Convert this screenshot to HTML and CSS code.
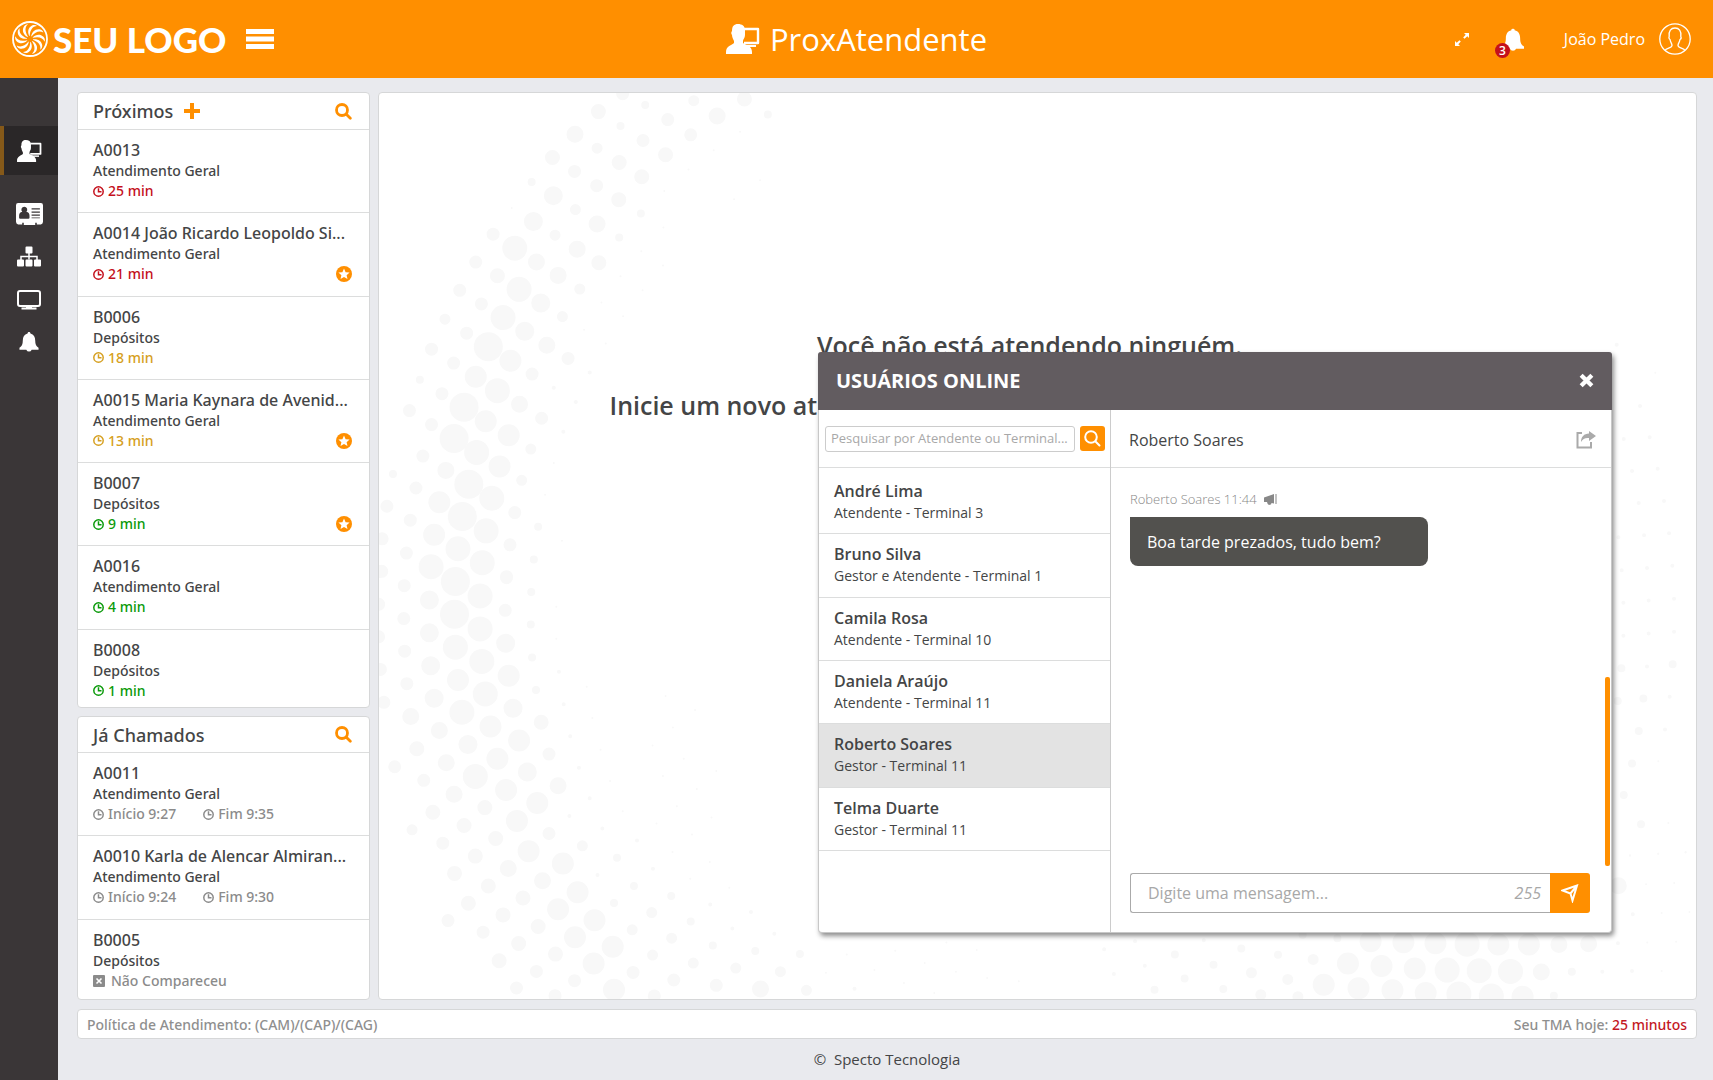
FILE: index.html
```html
<!DOCTYPE html>
<html lang="pt-BR">
<head>
<meta charset="utf-8">
<title>ProxAtendente</title>
<link rel="stylesheet" href="styles.css">
</head>
<body>
<svg class="sprite" aria-hidden="true">
  <symbol id="i-agent" viewBox="0 0 34 30">
    <path d="M12 0c4 0 7 2 7 6v5c0 3-2 4-2 6v2c3 2 9 3 9 9v2H0v-2c0-6 6-7 8-9v-2C7 15 6 13 6 11c-1-1-1-3 0-4 0-5 2-7 6-7z" fill="currentColor"/>
    <path d="M18 5h14v14H18" fill="none" stroke="currentColor" stroke-width="2.400" stroke-linejoin="round"/>
    <path d="M20 21h10v2H20z" fill="currentColor"/>
  </symbol>
  <symbol id="i-card" viewBox="0 0 26 21">
    <path fill="currentColor" fill-rule="evenodd" d="M2 0h22q2 0 2 2v16q0 2-2 2.500h-4v-1.500h-1.500v2h-11v-2H6v1.500H2q-2-.5-2-2.500V2q0-2 2-2zM8 3.500a2.800 2.800 0 0 0-2 4.800c-2 .4-3 1.700-3 4v1.700q0 1 1 1h8q1 0 1-1v-1.700c0-2.300-1-3.600-3-4a2.800 2.800 0 0 0-2-4.800zM15 5h8v1.200h-8zM15 8h8v1.200h-8zM15 11h8v1.200h-8zM15 13.800h8v.8h-8z"/>
  </symbol>
  <symbol id="i-tree" viewBox="0 0 24 20">
    <path fill="none" stroke="currentColor" stroke-width="1.500" d="M12 5v8M4 14v-4h16v4"/>
    <path fill="currentColor" d="M9.500 0h5q1 0 1 1v5q0 1-1 1h-5q-1 0-1-1V1q0-1 1-1zM1 13h5q1 0 1 1v5q0 1-1 1H1q-1 0-1-1v-5q0-1 1-1zM9.500 13h5q1 0 1 1v5q0 1-1 1h-5q-1 0-1-1v-5q0-1 1-1zM18 13h5q1 0 1 1v5q0 1-1 1h-5q-1 0-1-1v-5q0-1 1-1z"/>
  </symbol>
  <symbol id="i-screen" viewBox="0 0 24 20">
    <rect x="1" y="1" width="22" height="15" rx="2" fill="none" stroke="currentColor" stroke-width="2"/>
    <path fill="currentColor" d="M9 16h6v1.500h4.500V19.500h-15V17.500H9z"/>
  </symbol>
  <symbol id="i-bell" viewBox="0 0 20 22">
    <path fill="currentColor" d="M10 0c1 0 1.500.7 1.500 1.600C15 2.500 16.500 5 16.500 9c0 4 1 6 3.500 7.500v2h-7.200a3 3 0 0 1-5.600 0H0v-2C2.500 15 3.500 13 3.500 9c0-4 1.500-6.500 5-7.400C8.500.7 9 0 10 0z"/>
  </symbol>
  <symbol id="i-search" viewBox="0 0 17 17">
    <path fill="none" stroke="currentColor" stroke-width="2.800" stroke-linecap="round" d="M7 1.500a5.500 5.500 0 1 0 0 11 5.500 5.500 0 1 0 0-11M11.300 11.300l4 4"/>
  </symbol>
  <symbol id="i-clock" viewBox="0 0 11 11">
    <path fill="none" stroke="currentColor" stroke-width="1.500" d="M5.500.8a4.700 4.700 0 1 0 0 9.400 4.700 4.700 0 1 0 0-9.400M5.500 2.300v3.400h3"/>
  </symbol>
  <symbol id="i-star" viewBox="0 0 16 16">
    <circle cx="8" cy="8" r="8" fill="#ff8f00"/>
    <path fill="#fff" d="M8 2.500l1.600 3.700 4 .3-3 2.700.9 3.900L8 11l-3.500 2.100.9-3.900-3-2.700 4-.3z"/>
  </symbol>
</svg>

<header class="topbar">
  <div class="brand">
    <svg class="brand-mark" viewBox="0 0 36 36" aria-hidden="true">
      <circle cx="18" cy="18" r="17" fill="none" stroke="currentColor" stroke-width="1.800"/>
      <g fill="currentColor">
        <path id="blade" d="M17.300 15c-2-4-1.300-8.300 2.700-10.500 2-.9 4-.5 5 .5-4.200.2-7 3.800-7.300 10z"/>
        <use href="#blade" transform="rotate(36 18 18)"/><use href="#blade" transform="rotate(72 18 18)"/><use href="#blade" transform="rotate(108 18 18)"/><use href="#blade" transform="rotate(144 18 18)"/><use href="#blade" transform="rotate(180 18 18)"/><use href="#blade" transform="rotate(216 18 18)"/><use href="#blade" transform="rotate(252 18 18)"/><use href="#blade" transform="rotate(288 18 18)"/><use href="#blade" transform="rotate(324 18 18)"/>
      </g>
    </svg>
    <span class="brand-name">SEU LOGO</span>
    <button class="plain menu-toggle" aria-label="Menu"><svg viewBox="0 0 28 20" width="28" height="20"><path fill="currentColor" d="M0 0h28v5H0zM0 7.500h28v5H0zM0 15h28v5H0z"/></svg></button>
  </div>
  <h1 class="app-title"><svg width="34" height="30" aria-hidden="true"><use href="#i-agent"/></svg>ProxAtendente</h1>
  <div class="tools">
    <button class="plain" aria-label="Tela cheia"><svg class="expand" viewBox="0 0 14 13" width="14" height="13"><path fill="currentColor" d="M9 0h5v5l-1.700-1.700-2.800 2.500-1.300-1.300 2.500-2.800zM0 8l1.700 1.700 2.800-2.500 1.300 1.300-2.500 2.800L5 13H0z"/></svg></button>
    <button class="plain alerts" aria-label="Notificações"><svg viewBox="0 0 20 22" width="22" height="25"><use href="#i-bell"/></svg><span class="badge">3</span></button>
    <a class="account" href="#conta">João Pedro
      <svg viewBox="0 0 32 32" width="32" height="32" fill="none" stroke="currentColor" stroke-width="1.300" aria-hidden="true"><circle cx="16" cy="16" r="15.200"/><path d="M6 27.500c1-2.500 7-2.500 7-5 0-2-1.500-3-2-6-1-.5-1.300-2-.8-3C9.500 8 12 5 16 5s6.500 3 5.800 8.500c.5 1 .2 2.500-.8 3-.5 3-2 4-2 6 0 2.500 6 2.500 7 5"/></svg>
    </a>
  </div>
</header>

<div class="shell">
  <nav class="rail" aria-label="Principal">
    <a class="rail-link active" href="#atendimento" aria-label="Atendimento"><svg width="25" height="22"><use href="#i-agent"/></svg></a>
    <a class="rail-link" href="#cadastros" aria-label="Cadastros"><svg width="27" height="22"><use href="#i-card"/></svg></a>
    <a class="rail-link" href="#setores" aria-label="Setores"><svg width="24" height="21"><use href="#i-tree"/></svg></a>
    <a class="rail-link" href="#monitor" aria-label="Monitor"><svg width="24" height="20"><use href="#i-screen"/></svg></a>
    <a class="rail-link" href="#avisos" aria-label="Avisos"><svg width="20" height="21"><use href="#i-bell"/></svg></a>
  </nav>

  <div class="content">
    <div class="columns">
      <div class="queues">
        <section class="card upcoming">
          <div class="card-head">
            <h2>Próximos</h2>
            <button class="plain accent" aria-label="Adicionar"><svg viewBox="0 0 16 16" width="16" height="16"><path fill="currentColor" d="M6 0h4v6h6v4h-6v6H6v-6H0V6h6z"/></svg></button>
            <button class="plain accent push" aria-label="Pesquisar próximos"><svg width="17" height="17"><use href="#i-search"/></svg></button>
          </div>
          <ul class="tickets seven">
            <li><h3>A0013</h3><p>Atendimento Geral</p><p class="wait late"><svg width="11" height="11"><use href="#i-clock"/></svg>25 min</p></li>
            <li><h3>A0014 João Ricardo Leopoldo Si...</h3><p>Atendimento Geral</p><p class="wait late"><svg width="11" height="11"><use href="#i-clock"/></svg>21 min<svg class="push" width="16" height="16"><use href="#i-star"/></svg></p></li>
            <li><h3>B0006</h3><p>Depósitos</p><p class="wait warn"><svg width="11" height="11"><use href="#i-clock"/></svg>18 min</p></li>
            <li><h3>A0015 Maria Kaynara de Avenid...</h3><p>Atendimento Geral</p><p class="wait warn"><svg width="11" height="11"><use href="#i-clock"/></svg>13 min<svg class="push" width="16" height="16"><use href="#i-star"/></svg></p></li>
            <li><h3>B0007</h3><p>Depósitos</p><p class="wait good"><svg width="11" height="11"><use href="#i-clock"/></svg>9 min<svg class="push" width="16" height="16"><use href="#i-star"/></svg></p></li>
            <li><h3>A0016</h3><p>Atendimento Geral</p><p class="wait good"><svg width="11" height="11"><use href="#i-clock"/></svg>4 min</p></li>
            <li><h3>B0008</h3><p>Depósitos</p><p class="wait good"><svg width="11" height="11"><use href="#i-clock"/></svg>1 min</p></li>
          </ul>
        </section>
        <section class="card called">
          <div class="card-head">
            <h2>Já Chamados</h2>
            <button class="plain accent push" aria-label="Pesquisar chamados"><svg width="17" height="17"><use href="#i-search"/></svg></button>
          </div>
          <ul class="tickets three">
            <li><h3>A0011</h3><p>Atendimento Geral</p><p class="wait past"><svg width="11" height="11"><use href="#i-clock"/></svg>Início 9:27<svg class="second" width="11" height="11"><use href="#i-clock"/></svg>Fim 9:35</p></li>
            <li><h3>A0010 Karla de Alencar Almiran...</h3><p>Atendimento Geral</p><p class="wait past"><svg width="11" height="11"><use href="#i-clock"/></svg>Início 9:24<svg class="second" width="11" height="11"><use href="#i-clock"/></svg>Fim 9:30</p></li>
            <li><h3>B0005</h3><p>Depósitos</p><p class="wait past missed"><svg viewBox="0 0 12 12" width="12" height="12"><rect width="12" height="12" rx="1" fill="currentColor"/><path d="M3.500 3.500l5 5m0-5l-5 5" stroke="#fff" stroke-width="1.600"/></svg>Não Compareceu</p></li>
          </ul>
        </section>
      </div>

      <main class="card stage">
        <svg class="dots" viewBox="0 0 1318 909" preserveAspectRatio="none" aria-hidden="true">
          <g transform="translate(-9 -12) scale(.4337 .3333)">
            <path class="d2" d="M854 153h0M793 208h0M735 266h0M679 331h0M900 299h0M840 356h0M327 382h0M677 441h0M626 512h0M676 555h0M578 588h0M629 630h0M534 667h0M584 708h0M494 749h0M544 790h0M404 1245h0M443 1384h0M424 1150h0"/>
            <path class="d5" d="M424 923h0M475 966h0M507 877h0M446 1056h0"/>
            <path class="d8" d="M635 72h0M578 135h0M918 101h0M625 399h0M373 304h0M575 471h0M115 899h0M53 1183h0M378 1440h0M388 1342h0"/>
            <path class="d10" d="M747 59h0M524 202h0M484 626h0M474 387h0M427 464h0M173 717h0M371 1108h0M350 1202h0M444 709h0"/>
            <path class="d12" d="M583 38h0M687 116h0M630 179h0M472 272h0M523 315h0M284 461h0M244 545h0M207 630h0M257 671h0M223 759h0M142 807h0M193 849h0M166 941h0M91 992h0M142 1034h0M122 1129h0M106 1225h0M39 1280h0M93 1322h0M28 1378h0M84 1421h0M27 1476h0M457 835h0M374 882h0M396 1015h0M334 1299h0M323 1396h0M315 1492h0M740 162h0"/>
            <path class="d15" d="M527 92h0M421 230h0M575 245h0M682 222h0M627 288h0M574 357h0M528 547h0M294 586h0M864 54h0"/>
            <path class="d17" d="M473 160h0M801 105h0M524 430h0M478 506h0M175 1172h0M408 795h0M345 973h0M384 545h0M434 585h0"/>
            <path class="d19" d="M423 345h0M394 668h0M357 753h0M377 423h0"/>
            <path class="d22" d="M324 842h0M244 890h0M267 1024h0M320 1066h0M160 1268h0M148 1366h0M299 1160h0M141 1464h0M259 1451h0"/>
            <path class="d25" d="M334 503h0M344 627h0M307 712h0M294 932h0M246 1118h0M281 1256h0M268 1354h0M203 1408h0"/>
            <path class="d29" d="M273 800h0M217 982h0M194 1076h0M228 1214h0M213 1311h0"/>
          </g>
          <g transform="translate(-9 468) scale(.4337 .3333)">
            <path class="d2" d="M430 142h0M430 239h0M500 383h0M513 477h0M532 573h0M554 667h0M583 758h0M661 795h0M724 600h0M652 560h0M699 506h0M750 453h0M682 411h0M799 637h0M754 691h0M708 743h0M788 777h0M676 652h0M698 881h0M743 828h0M784 911h0M739 961h0M829 988h0M1100 1189h0M1212 1178h0M1280 1215h0M1164 1236h0M1052 1244h0M1232 1275h0M1330 1153h0M1302 1305h0M1400 1176h0M1352 1241h0M1424 1260h0M1497 1270h0"/>
            <path class="d5" d="M436 338h0M447 436h0M462 532h0M482 627h0M507 719h0M460 772h0M536 810h0M525 950h0M653 931h0M616 846h0M785 1039h0M879 1061h0M933 1127h0M836 1111h0M1118 1292h0"/>
            <path class="d8" d="M372 98h0M371 196h0M374 295h0M383 393h0M570 898h0M609 983h0M695 1013h0M563 1034h0M740 1090h0M791 1162h0M889 1179h0M992 1188h0"/>
            <path class="d10" d="M650 1063h0M605 1115h0M652 1191h0M696 1140h0M746 1215h0M844 1230h0M947 1241h0M1007 1297h0M97 814h0M490 862h0"/>
            <path class="d12" d="M79 79h0M78 178h0M80 276h0M85 374h0M57 624h0M124 665h0M168 854h0M22 36h0M20 135h0M20 233h0M24 331h0M32 430h0M315 55h0M312 153h0M413 586h0M413 825h0M180 1087h0M261 1122h0M607 1243h0M701 1266h0M799 1282h0M472 1268h0M338 1290h0M427 1313h0M656 1314h0M384 1240h0"/>
            <path class="d15" d="M108 570h0M145 761h0M217 801h0M195 945h0M227 1035h0M273 983h0M307 1070h0M343 1156h0M298 1208h0M265 747h0M290 840h0M353 1019h0M388 1105h0M428 1188h0M395 490h0M243 893h0"/>
            <path class="d17" d="M94 473h0M160 515h0M176 612h0M194 707h0M319 930h0M398 967h0M434 681h0M901 1293h0"/>
            <path class="d19" d="M137 122h0M137 221h0M140 320h0M148 418h0M226 557h0M313 252h0M330 448h0M363 640h0"/>
            <path class="d22" d="M203 363h0M320 350h0M278 503h0M344 545h0M294 600h0M314 694h0M386 733h0M339 787h0M366 878h0M445 915h0M479 1002h0M434 1053h0M518 1086h0M473 1137h0M516 1216h0M563 1295h0M560 1166h0"/>
            <path class="d25" d="M254 110h0M254 209h0M258 307h0M197 264h0M266 405h0M212 460h0M243 653h0M141 22h0M259 10h0"/>
            <path class="d29" d="M197 66h0M195 165h0"/>
          </g>
          <g transform="translate(721 748) scale(.391 .3333)">
            <path class="d2" d="M1358 51h0M1430 46h0M1500 42h0M1399 138h0M1471 134h0M1510 221h0M1439 224h0M1476 311h0M1402 313h0M1439 399h0"/>
            <path class="d5" d="M91 309h0M267 306h0M12 333h0M116 383h0M37 408h0M1365 228h0M1327 315h0M1363 399h0M1287 401h0"/>
            <path class="d8" d="M193 349h0M292 380h0M218 421h0M141 455h0M317 453h0M363 331h0M457 350h0M609 300h0M520 290h0M1209 401h0M1163 473h0"/>
            <path class="d10" d="M389 404h0M482 424h0M547 364h0M413 470h0M508 476h0"/>
            <path class="d17" d="M1176 319h0M1252 317h0M1131 402h0M1328 142h0"/>
            <path class="d22" d="M694 309h0M778 312h0M860 315h0M636 376h0M574 440h0M722 384h0M807 391h0M663 451h0M1099 319h0M1021 319h0M750 457h0M835 465h0M1083 476h0"/>
            <path class="d25" d="M941 318h0M890 396h0M972 398h0M1052 400h0M920 468h0M1003 474h0"/>
          </g>
          <g transform="translate(1201 228) scale(.3333 .4464)">
            <path class="d2" d="M229 118h0M238 991h0M268 1130h0M320 1195h0M153 1203h0M238 1199h0"/>
            <path class="d5" d="M113 55h0M183 193h0M134 267h0M212 263h0M159 339h0M179 411h0M255 406h0M195 483h0M204 557h0M280 552h0M118 488h0"/>
            <path class="d5" d="M236 334h0M270 479h0M128 562h0M133 635h0M209 630h0M285 626h0M209 704h0M285 700h0M133 709h0M204 778h0M272 846h0M258 920h0"/>
            <path class="d8" d="M127 782h0M281 773h0M116 856h0M193 850h0M179 923h0M159 996h0M134 1067h0M186 1133h0"/>
          </g>
        </svg>
        <div class="idle">
          <p class="idle-title">Você não está atendendo ninguém.</p>
          <p class="idle-hint">Inicie um novo atendimento ou chame o próximo.</p>
        </div>
      </main>
    </div>

    <section class="card status">
      <span>Política de Atendimento: (CAM)/(CAP)/(CAG)</span>
      <span>Seu TMA hoje: <strong>25 minutos</strong></span>
    </section>
    <footer class="footer">©&nbsp; Specto Tecnologia</footer>

    <section class="chat" role="dialog" aria-labelledby="chat-title">
      <header class="chat-bar">
        <h2 id="chat-title">USUÁRIOS ONLINE</h2>
        <button class="plain" aria-label="Fechar"><svg viewBox="0 0 14 14" width="15" height="15"><path d="M2 2l10 10m0-10L2 12" stroke="currentColor" stroke-width="4"/></svg></button>
      </header>
      <div class="chat-body">
        <div class="people">
          <form class="find">
            <input type="text" aria-label="Pesquisar usuários" placeholder="Pesquisar por Atendente ou Terminal...">
            <button type="button" aria-label="Pesquisar"><svg viewBox="0 0 17 17" width="17" height="17" fill="none" stroke="currentColor" stroke-width="2" stroke-linecap="round"><path d="M7 1.200a5.800 5.800 0 1 0 0 11.600 5.800 5.800 0 1 0 0-11.600M11.500 11.500l4 4"/></svg></button>
          </form>
          <ul class="users">
            <li><h3>André Lima</h3><p>Atendente - Terminal 3</p></li>
            <li><h3>Bruno Silva</h3><p>Gestor e Atendente - Terminal 1</p></li>
            <li><h3>Camila Rosa</h3><p>Atendente - Terminal 10</p></li>
            <li><h3>Daniela Araújo</h3><p>Atendente - Terminal 11</p></li>
            <li class="selected"><h3>Roberto Soares</h3><p>Gestor - Terminal 11</p></li>
            <li><h3>Telma Duarte</h3><p>Gestor - Terminal 11</p></li>
          </ul>
        </div>
        <div class="talk">
          <div class="talk-head">
            <span>Roberto Soares</span>
            <button class="plain muted" aria-label="Compartilhar"><svg viewBox="0 0 20 18" width="20" height="18"><path d="M6 2H1.500v14.500h13.500V11" fill="none" stroke="currentColor" stroke-width="2"/><path fill="currentColor" d="M13 0l7 5-7 5V7C9 6.500 7 8 5 11c0-5 3-8.500 8-8.500z"/></svg></button>
          </div>
          <div class="log">
            <p class="meta">Roberto Soares 11:44 <svg viewBox="0 0 13 11" width="13" height="11"><path fill="currentColor" d="M0 3.500L10 0v9.500L7.500 9Q7.500 11 5 11 3.500 11 3 8H0zM11.500 0h1v10h-1z"/></svg></p>
            <p class="bubble">Boa tarde prezados, tudo bem?</p>
            <span class="thumb"></span>
          </div>
          <form class="compose">
            <div class="field">
              <input type="text" aria-label="Mensagem" placeholder="Digite uma mensagem...">
              <span class="count">255</span>
            </div>
            <button type="button" aria-label="Enviar"><svg viewBox="0 0 18 19" width="18" height="19" fill="none" stroke="currentColor" stroke-width="2"><path d="M1.500 6.500L16 1.500l-4.500 15L9.500 9.500zM9.500 9.500L16 1.500"/></svg></button>
          </form>
        </div>
      </div>
    </section>
  </div>
</div>
</body>
</html>
```
FILE: styles.css
```css
* { box-sizing: border-box; }
body {
  margin: 0;
  min-height: 100vh;
  display: flex;
  flex-direction: column;
  background: #e9eaee;
  color: #444546;
  font-family: "Open Sans", "Noto Sans", sans-serif;
  font-size: 14px;
}
h1, h2, h3, p, ul { margin: 0; padding: 0; font-weight: inherit; }
ul { list-style: none; }
svg { display: block; flex: none; }
.sprite { position: absolute; width: 0; height: 0; }
button, input { font: inherit; color: inherit; margin: 0; }
.plain { display: block; padding: 0; border: 0; background: none; }
.accent { color: #ff8f00; }
.muted { color: #aaa; }
.push { margin-left: auto; }

.topbar {
  height: 78px;
  padding: 0 12px;
  display: grid;
  grid-template-columns: 1fr auto 1fr;
  align-items: center;
  background: #ff8f00;
  color: #fff;
}
.brand { display: flex; align-items: center; }
.brand-mark { width: 36px; height: 36px; margin-right: 5px; }
.brand-name { font: 900 35px/40px Lato, sans-serif; }
.menu-toggle { margin-left: 20px; }
.app-title { display: flex; align-items: center; gap: 10px; font-size: 31px; line-height: 40px; }
.tools { display: flex; align-items: center; justify-content: flex-end; padding-right: 10px; }
.alerts { position: relative; margin: 2px 40px 0 33px; }
.badge {
  position: absolute;
  left: -7px;
  bottom: -5px;
  width: 15px;
  height: 15px;
  border-radius: 50%;
  background: #c4101c;
  font-size: 12px;
  font-weight: 600;
  line-height: 15px;
}
.account { display: flex; align-items: center; gap: 14px; color: #fff; font-size: 16px; text-decoration: none; }

.shell { flex: 1; display: flex; }
.rail { width: 58px; padding-top: 48px; background: #3a3637; color: #fff; }
.rail-link { display: flex; align-items: center; justify-content: center; height: 43px; color: #fff; }
.rail-link.active { height: 49px; margin-bottom: 17px; background: #2a2728; border-left: 4px solid #855919; padding-right: 3px; }

.content { position: relative; flex: 1; min-width: 0; padding: 14px 16px 0 19px; display: flex; flex-direction: column; }
.columns { flex: 1; display: flex; gap: 8px; }
.card { background: #fff; border: 1px solid #d6d7d8; border-radius: 4px; overflow: hidden; }
.queues { width: 293px; display: flex; flex-direction: column; gap: 8px; font-family: "Noto Sans", "Open Sans", sans-serif; }
.upcoming { flex: 1; }
.called { height: 284px; }
.card-head { display: flex; align-items: center; gap: 11px; height: 37px; padding: 0 17px 0 15px; border-bottom: 1px solid #dcdddd; }
.called .card-head { height: 36px; }
.card-head h2 { font-size: 18px; font-weight: 500; line-height: 24px; }
.tickets { display: grid; grid-auto-rows: 1fr; }
.seven { height: 583px; margin-bottom: -8px; }
.three { height: 250px; }
.tickets li { padding: 9px 17px 0 15px; border-bottom: 1px solid #dcdddd; font-weight: 500; }
.tickets h3 { font-size: 16px; line-height: 22px; white-space: nowrap; }
.tickets p { font-size: 14px; line-height: 20px; }
.tickets .wait { display: flex; align-items: center; gap: 4px; }
.tickets .missed { gap: 6px; }
.wait .second { margin-left: 23px; }
.late { color: #c4101c; }
.warn { color: #d6a021; }
.good { color: #0a9a0a; }
.past { color: #8b8b8b; }

.stage { position: relative; flex: 1; }
.dots { position: absolute; inset: 0; width: 100%; height: 100%; }
.dots path { stroke: #f8f8f8; stroke-linecap: round; vector-effect: non-scaling-stroke; }
.d2 { stroke-width: 2px; }
.d5 { stroke-width: 4px; }
.d8 { stroke-width: 8px; }
.d10 { stroke-width: 11px; }
.d12 { stroke-width: 13px; }
.d15 { stroke-width: 15px; }
.d17 { stroke-width: 17px; }
.d19 { stroke-width: 19px; }
.d22 { stroke-width: 22px; }
.d25 { stroke-width: 25px; }
.d29 { stroke-width: 29px; }
.idle { position: relative; width: 856px; margin: 0 auto; padding-top: 234px; font-size: 25px; line-height: 36px; font-weight: 600; }
.idle-title { padding-right: 16px; text-align: center; }
.idle-hint { margin-top: 24px; }

.status { margin-top: 9px; height: 30px; padding: 0 9px; display: flex; align-items: center; justify-content: space-between; font-family: "Noto Sans", sans-serif; font-weight: 500; color: #8f8f8f; }
.status strong { font-weight: 500; color: #c4181f; }
.footer { height: 41px; font-size: 15px; line-height: 41px; text-align: center; }

.chat {
  position: absolute;
  top: 274px;
  right: 101px;
  width: 794px;
  height: 581px;
  display: flex;
  flex-direction: column;
  background: #fff;
  border: 1px solid #c8c8c8;
  border-top: 0;
  border-radius: 4px;
  box-shadow: 2px 3px 5px rgba(0, 0, 0, .45);
}
.chat-bar {
  height: 58px;
  margin: 0 -1px;
  padding: 0 18px 2px;
  display: flex;
  align-items: center;
  justify-content: space-between;
  border-radius: 3px 3px 0 0;
  background: #625c60;
  color: #fff;
}
.chat-bar h2 { font-size: 20px; font-weight: 700; }
.chat-body { flex: 1; display: flex; }
.people { width: 292px; border-right: 1px solid #ccc; }
.find { display: flex; align-items: center; gap: 5px; height: 58px; padding: 0 5px 0 6px; border-bottom: 1px solid #dcdddd; }
.find input { flex: 1; min-width: 0; height: 26px; padding: 0 5px 2px; border: 1px solid #ccc; border-radius: 3px; background: #fff; font-size: 13px; }
.find button { width: 25px; height: 25px; padding: 4px; border: 0; border-radius: 3px; background: #ff8f00; color: #fff; }
::placeholder { color: #a8a8a8; opacity: 1; }
.users { display: grid; grid-auto-rows: 1fr; height: 383px; padding-top: 3px; }
.users li { padding: 9px 15px; border-bottom: 1px solid #dcdddd; }
.users .selected { background: #e3e3e3; }
.users h3 { font-size: 16px; font-weight: 600; line-height: 22px; }
.users p { line-height: 21px; }
.talk { flex: 1; display: flex; flex-direction: column; }
.talk-head { display: flex; align-items: center; justify-content: space-between; height: 58px; padding: 2px 15px 0 18px; border-bottom: 1px solid #dcdddd; font-size: 16px; }
.log { position: relative; flex: 1; padding: 21px 19px 0; }
.meta { display: flex; align-items: center; gap: 7px; font-size: 13px; font-weight: 300; line-height: 20px; color: #888; }
.bubble { width: 298px; margin-top: 8px; padding: 11px 17px 10px; border-radius: 0 8px 8px 8px; background: #52514e; color: #fff; font-size: 16px; line-height: 28px; }
.thumb { position: absolute; right: 1px; bottom: 7px; width: 5px; height: 189px; border-radius: 2px; background: #ff8f00; }
.compose { display: flex; height: 40px; margin: 0 21px 19px 19px; }
.field { flex: 1; display: flex; align-items: center; padding: 0 9px 0 17px; border: 1px solid #aaa; border-right: 0; border-radius: 3px 0 0 3px; font-size: 16px; color: #a8a8a8; }
.field input { flex: 1; min-width: 0; padding: 0; border: 0; background: none; }
.count { font-style: italic; }
.compose button { display: flex; align-items: center; justify-content: center; width: 40px; padding: 0; border: 0; border-radius: 0 3px 3px 0; background: #ff8f00; color: #fff; }
```
